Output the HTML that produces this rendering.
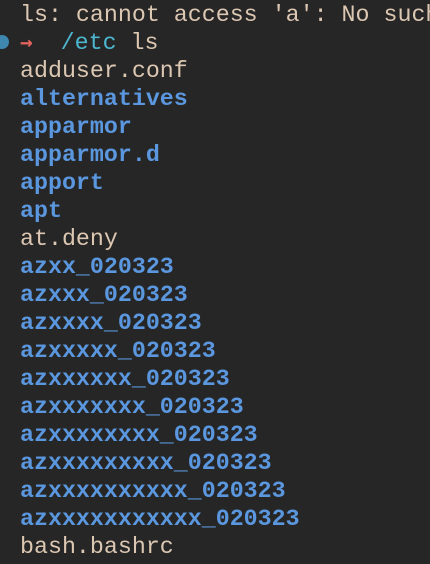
<!DOCTYPE html>
<html><head><meta charset="utf-8"><style>
html,body{margin:0;padding:0;background:#262626;width:430px;height:564px;overflow:hidden}
pre{margin:0;padding:0 0 0 20px;width:410px;overflow:hidden;font-family:"Liberation Mono",monospace;font-size:23.3px;line-height:28px;color:#dcc7b2;white-space:pre;position:relative;top:1px}
.b{color:#5b97de;font-weight:bold}
.r{color:#e0635c;font-weight:bold;font-family:"DejaVu Sans Mono",monospace;font-size:21px;line-height:0}
.c{color:#4cb6cf}
.dot{position:absolute;left:-5px;top:35px;width:14px;height:14px;border-radius:50%;background:#3d87b0}
</style></head><body>
<div class="dot"></div>
<pre>ls: cannot access 'a': No such
<span class="r">→</span>  <span class="c">/etc</span> ls
adduser.conf
<span class="b">alternatives</span>
<span class="b">apparmor</span>
<span class="b">apparmor.d</span>
<span class="b">apport</span>
<span class="b">apt</span>
at.deny
<span class="b">azxx_020323</span>
<span class="b">azxxx_020323</span>
<span class="b">azxxxx_020323</span>
<span class="b">azxxxxx_020323</span>
<span class="b">azxxxxxx_020323</span>
<span class="b">azxxxxxxx_020323</span>
<span class="b">azxxxxxxxx_020323</span>
<span class="b">azxxxxxxxxx_020323</span>
<span class="b">azxxxxxxxxxx_020323</span>
<span class="b">azxxxxxxxxxxx_020323</span>
bash.bashrc
bash_completion
</pre>
</body></html>
